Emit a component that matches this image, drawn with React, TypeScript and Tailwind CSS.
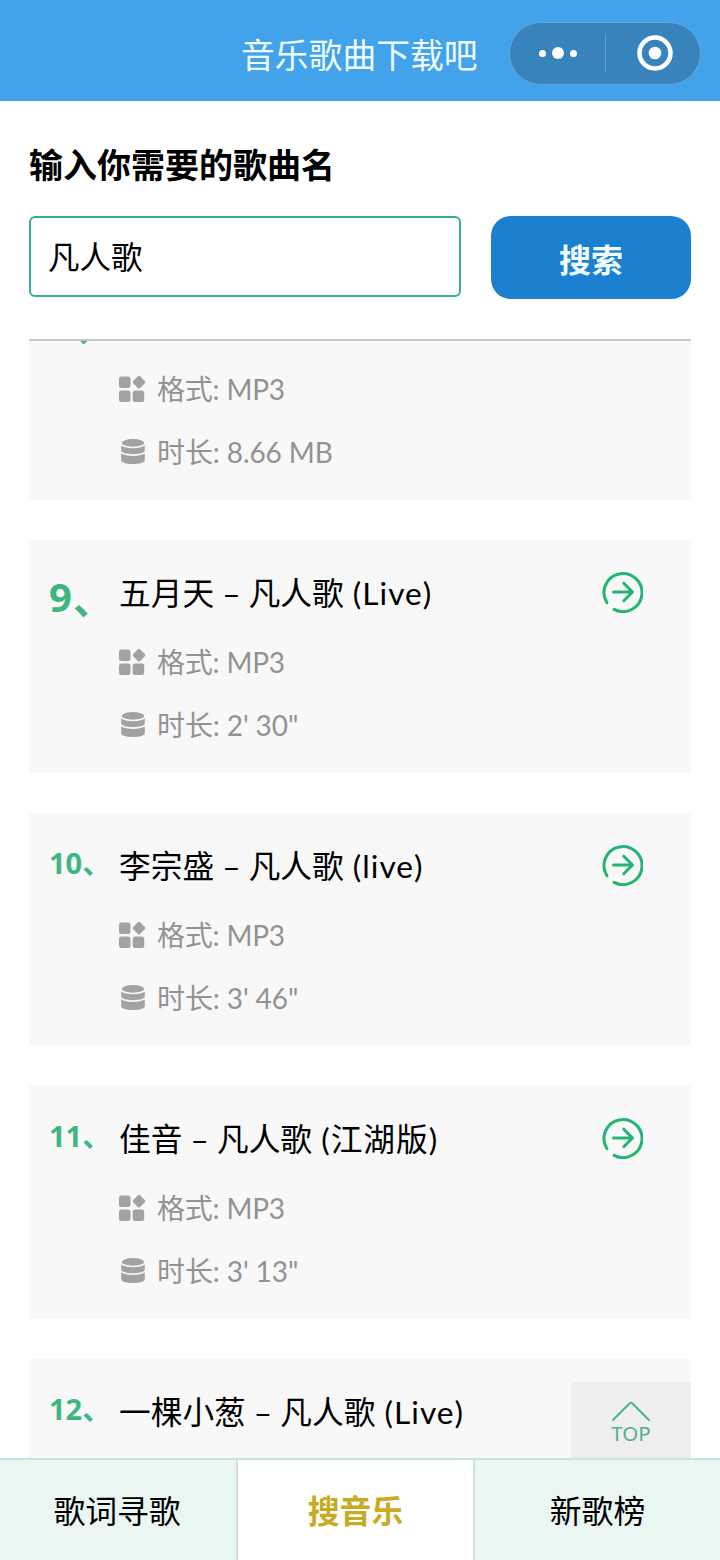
import { useState } from "react";

const songs = [
  { no: 8, name: "", tag: "", format: "MP3", length: "8.66 MB" },
  { no: 9, name: "五月天 – 凡人歌", tag: "(Live)", format: "MP3", length: "2' 30\"" },
  { no: 10, name: "李宗盛 – 凡人歌", tag: "(live)", format: "MP3", length: "3' 46\"" },
  { no: 11, name: "佳音 – 凡人歌", tag: "(江湖版)", format: "MP3", length: "3' 13\"" },
  { no: 12, name: "一棵小葱 – 凡人歌", tag: "(Live)" }
];

const tabs = [
  { name: "歌词寻歌", width: "w-[238px] border-r-2 pr-[2px]" },
  { name: "搜音乐", width: "w-[237px] border-r-2" },
  { name: "新歌榜", width: "flex-1" }
];

function FormatIcon() {
  return (
    <svg className="mb-[2px] h-7 w-7 shrink-0" viewBox="0 0 28 28" fill="#a2a2a2">
      <rect x="0" y="2.5" width="11.5" height="11.5" rx="2.5" />
      <rect x="0" y="16.5" width="11.5" height="11.5" rx="2.5" />
      <rect x="13.7" y="16.5" width="11.5" height="11.5" rx="2.5" />
      <rect x="15.1" y="3.2" width="9.8" height="9.8" rx="1.6" transform="rotate(45 20 8.1)" />
    </svg>
  );
}

function DiskIcon() {
  return (
    <svg className="h-7 w-7 shrink-0" viewBox="0 0 28 28" fill="#a2a2a2">
      <ellipse cx="14" cy="4.9" rx="11.2" ry="3.8" />
      <path d="M2.2 7.6c2.4 1.9 6.7 2.7 11.8 2.7s9.4-.8 11.8-2.7v5c0 2.2-5.2 3.6-11.8 3.6s-11.8-1.4-11.8-3.6z" />
      <path d="M2.2 15.6c2.4 1.7 6.7 2.4 11.8 2.4s9.4-.7 11.8-2.4v6.3c0 2.6-5.2 4.1-11.8 4.1s-11.8-1.5-11.8-4.1z" />
    </svg>
  );
}

function ArrowIcon() {
  return (
    <svg className="h-[42px] w-[42px]" viewBox="0 0 42 42" fill="none" stroke="#22b573" strokeWidth="3" strokeLinecap="round" strokeLinejoin="round">
      <path d="M5.9 31.7A19 19 0 1 1 13.1 38.4" />
      <path d="M12.5 21H31.5M22.8 12.2L31.5 21L22.8 29.8" />
    </svg>
  );
}

export default function App() {
  const [keyword, setKeyword] = useState("凡人歌");
  const [active, setActive] = useState("搜音乐");

  return (
    <div className="flex h-[1560px] w-[720px] flex-col overflow-hidden bg-white font-[Lato,'Noto_Sans_CJK_SC',sans-serif] text-black">
      {/* Title bar */}
      <header className="flex h-[101px] shrink-0 items-center bg-[#43a3ea] pt-[5px] pr-[19px]">
        <h1 className="ml-[241px] w-[268px] pt-[3px] text-[33.8px] leading-[50px] whitespace-nowrap text-[#effcff]">音乐歌曲下载吧</h1>
        <div className="flex h-[63px] w-[192px] items-center rounded-full border border-[#63a9dc] bg-[#3983bc]">
          <button className="flex w-[95px] items-center justify-center gap-[6px]">
            <span className="h-[7px] w-[7px] rounded-full bg-white" />
            <span className="h-3 w-3 rounded-full bg-white" />
            <span className="h-[7px] w-[7px] rounded-full bg-white" />
          </button>
          <span className="h-[38px] w-px bg-[#63a0cd]" />
          <button className="flex flex-1 justify-center pl-1">
            <svg className="h-9 w-9" viewBox="0 0 36 36">
              <circle cx="18" cy="18" r="15.5" fill="none" stroke="white" strokeWidth="4.5" />
              <circle cx="18" cy="18" r="6.3" fill="white" />
            </svg>
          </button>
        </div>
      </header>

      {/* Search */}
      <section className="h-[238px] shrink-0 px-[29px] pt-[39px]">
        <h2 className="text-[34px] leading-[50px] font-bold">输入你需要的歌曲名</h2>
        <div className="mt-[26px] flex gap-[30px]">
          <input
            className="h-[81px] w-[432px] rounded-md border-2 border-[#35b37e] bg-white px-[17px] pb-1 text-[31.5px] outline-none"
            value={keyword}
            onChange={(e) => setKeyword(e.target.value)}
          />
          <button className="h-[83px] w-[200px] rounded-[20px] bg-[#1b80d0] pt-1 text-[32px] font-bold text-[#effcff]">搜索</button>
        </div>
      </section>

      {/* Results */}
      <main className="relative mx-[29px] flex-1 overflow-hidden border-t-2 border-[#c6c6c6]">
        <div className="-mt-[74px] flex flex-col gap-10">
          {songs.map((song) => (
            <article key={song.no} className="flex h-[233px] shrink-0 bg-[#f8f8f8] pl-[20px]">
              <div
                className={`flex w-[70px] shrink-0 font-['Noto_Sans','Noto_Sans_CJK_SC',sans-serif] font-bold whitespace-nowrap text-[#3db782] ${
                  song.no < 10 ? "pt-[27px] text-[40px] leading-[60px]" : "pt-[27px] text-[29px] leading-[46px]"
                }`}
              >
                <span>{song.no}</span>
                <span className={song.no < 10 ? "pt-[2px] pl-px" : ""}>、</span>
              </div>
              <div className="flex-1 pt-[29px]">
                <h3 className="h-[48px] text-[31.7px] leading-[48px] whitespace-nowrap">
                  {song.name} <span className="ml-px tracking-[1px]">{song.tag}</span>
                </h3>
                {song.format && (
                  <>
                    <p className="mt-[25px] flex h-10 items-center gap-[10px] text-[28px] leading-10 tracking-[-0.2px] text-[#929292]">
                      <FormatIcon />
                      格式: {song.format}
                    </p>
                    <p className="mt-[23px] flex h-10 items-center gap-[10px] text-[28px] leading-10 tracking-[-0.1px] text-[#929292]">
                      <DiskIcon />
                      时长: {song.length}
                    </p>
                  </>
                )}
              </div>
              <button className="mt-[31px] mr-[48px] h-[42px]">
                <ArrowIcon />
              </button>
            </article>
          ))}
        </div>

        {/* Back to top */}
        <button className="absolute right-0 bottom-0 flex h-[76px] w-[120px] flex-col items-center bg-[#eeeeee] pt-[18px] font-['Noto_Sans',sans-serif] text-[20.5px] leading-[22px] text-[#4db28b]">
          <svg className="h-[22px] w-10 shrink-0" viewBox="0 0 40 22" fill="none" stroke="#4db28b" strokeWidth="2" strokeLinecap="round" strokeLinejoin="round">
            <path d="M2 20L18.5 3.5Q20 2 21.5 3.5L38 20" />
          </svg>
          TOP
        </button>
      </main>

      {/* Tab bar */}
      <nav className="flex h-[102px] shrink-0 border-t-2 border-[#cbe1d9]">
        {tabs.map((tab) => (
          <button
            key={tab.name}
            onClick={() => setActive(tab.name)}
            className={`border-[#cbe1d9] pt-1 text-[31.8px] ${tab.width} ${
              active === tab.name ? "bg-white font-bold text-[#c6ac23]" : "bg-[#e9f6f1]"
            }`}
          >
            {tab.name}
          </button>
        ))}
      </nav>
    </div>
  );
}
